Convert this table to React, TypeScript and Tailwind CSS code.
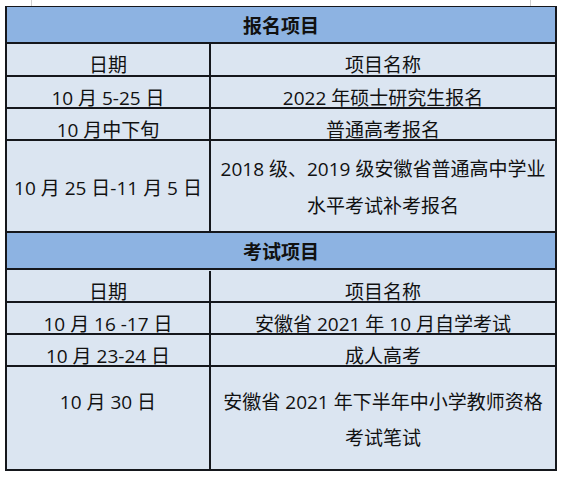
const font = { fontFamily: "'Open Sans', 'Noto Sans CJK SC', sans-serif" };

function Section({ title }: { title: string }) {
  return (
    <div className="flex h-[37px] items-center justify-center border-b-2 border-[#15171c] bg-[#8db3e2] pt-[2px] text-[19px] font-bold">
      {title}
    </div>
  );
}

function Row({
  date,
  name,
  h,
  top,
}: {
  date: React.ReactNode;
  name: React.ReactNode;
  h: string;
  top?: boolean;
}) {
  return (
    <div className={`grid grid-cols-[204px_1fr] border-b-2 border-[#15171c] ${h}`}>
      <div
        className={`flex justify-center border-r-2 border-[#15171c] whitespace-nowrap ${
          top ? "items-start pt-[17px]" : "items-center pt-[3px]"
        }`}
      >
        {date}
      </div>
      <div className="flex items-center justify-center pt-[3px] text-center whitespace-nowrap">
        {name}
      </div>
    </div>
  );
}

export default function App() {
  return (
    <div className="relative h-[477px] w-[564px] bg-white pl-[5px] pt-[6px]" style={font}>
      <div className="absolute left-[31px] top-0 h-[6px] w-px bg-[#d0d0d0]"></div>
      <div className="absolute left-[530px] top-0 h-[6px] w-px bg-[#d0d0d0]"></div>
      <div className="w-[552px] border-t border-r-2 border-l-2 border-[#15171c] bg-[#dbe5f1] text-[19px] leading-[36px] text-[#111]">
        <Section title="报名项目" />
        <Row h="h-[33px]" date="日期" name="项目名称" />
        <Row h="h-[32px]" date="10 月 5-25 日" name="2022 年硕士研究生报名" />
        <Row h="h-[32px]" date="10 月中下旬" name="普通高考报名" />
        <Row
          h="h-[92px]"
          date="10 月 25 日-11 月 5 日"
          name={
            <span className="leading-[37px]">
              2018 级、2019 级安徽省普通高中学业
              <br />
              水平考试补考报名
            </span>
          }
        />
        <div className="h-[38px]">
          <Section title="考试项目" />
        </div>
        <Row h="h-[32px]" date="日期" name="项目名称" />
        <Row h="h-[32px]" date="10 月 16 -17 日" name="安徽省 2021 年 10 月自学考试" />
        <Row h="h-[32px]" date="10 月 23-24 日" name="成人高考" />
        <Row
          h="h-[104px]"
          top
          date="10 月 30 日"
          name={
            <span className="leading-[36px]">
              安徽省 2021 年下半年中小学教师资格
              <br />
              考试笔试
            </span>
          }
        />
      </div>
    </div>
  );
}
